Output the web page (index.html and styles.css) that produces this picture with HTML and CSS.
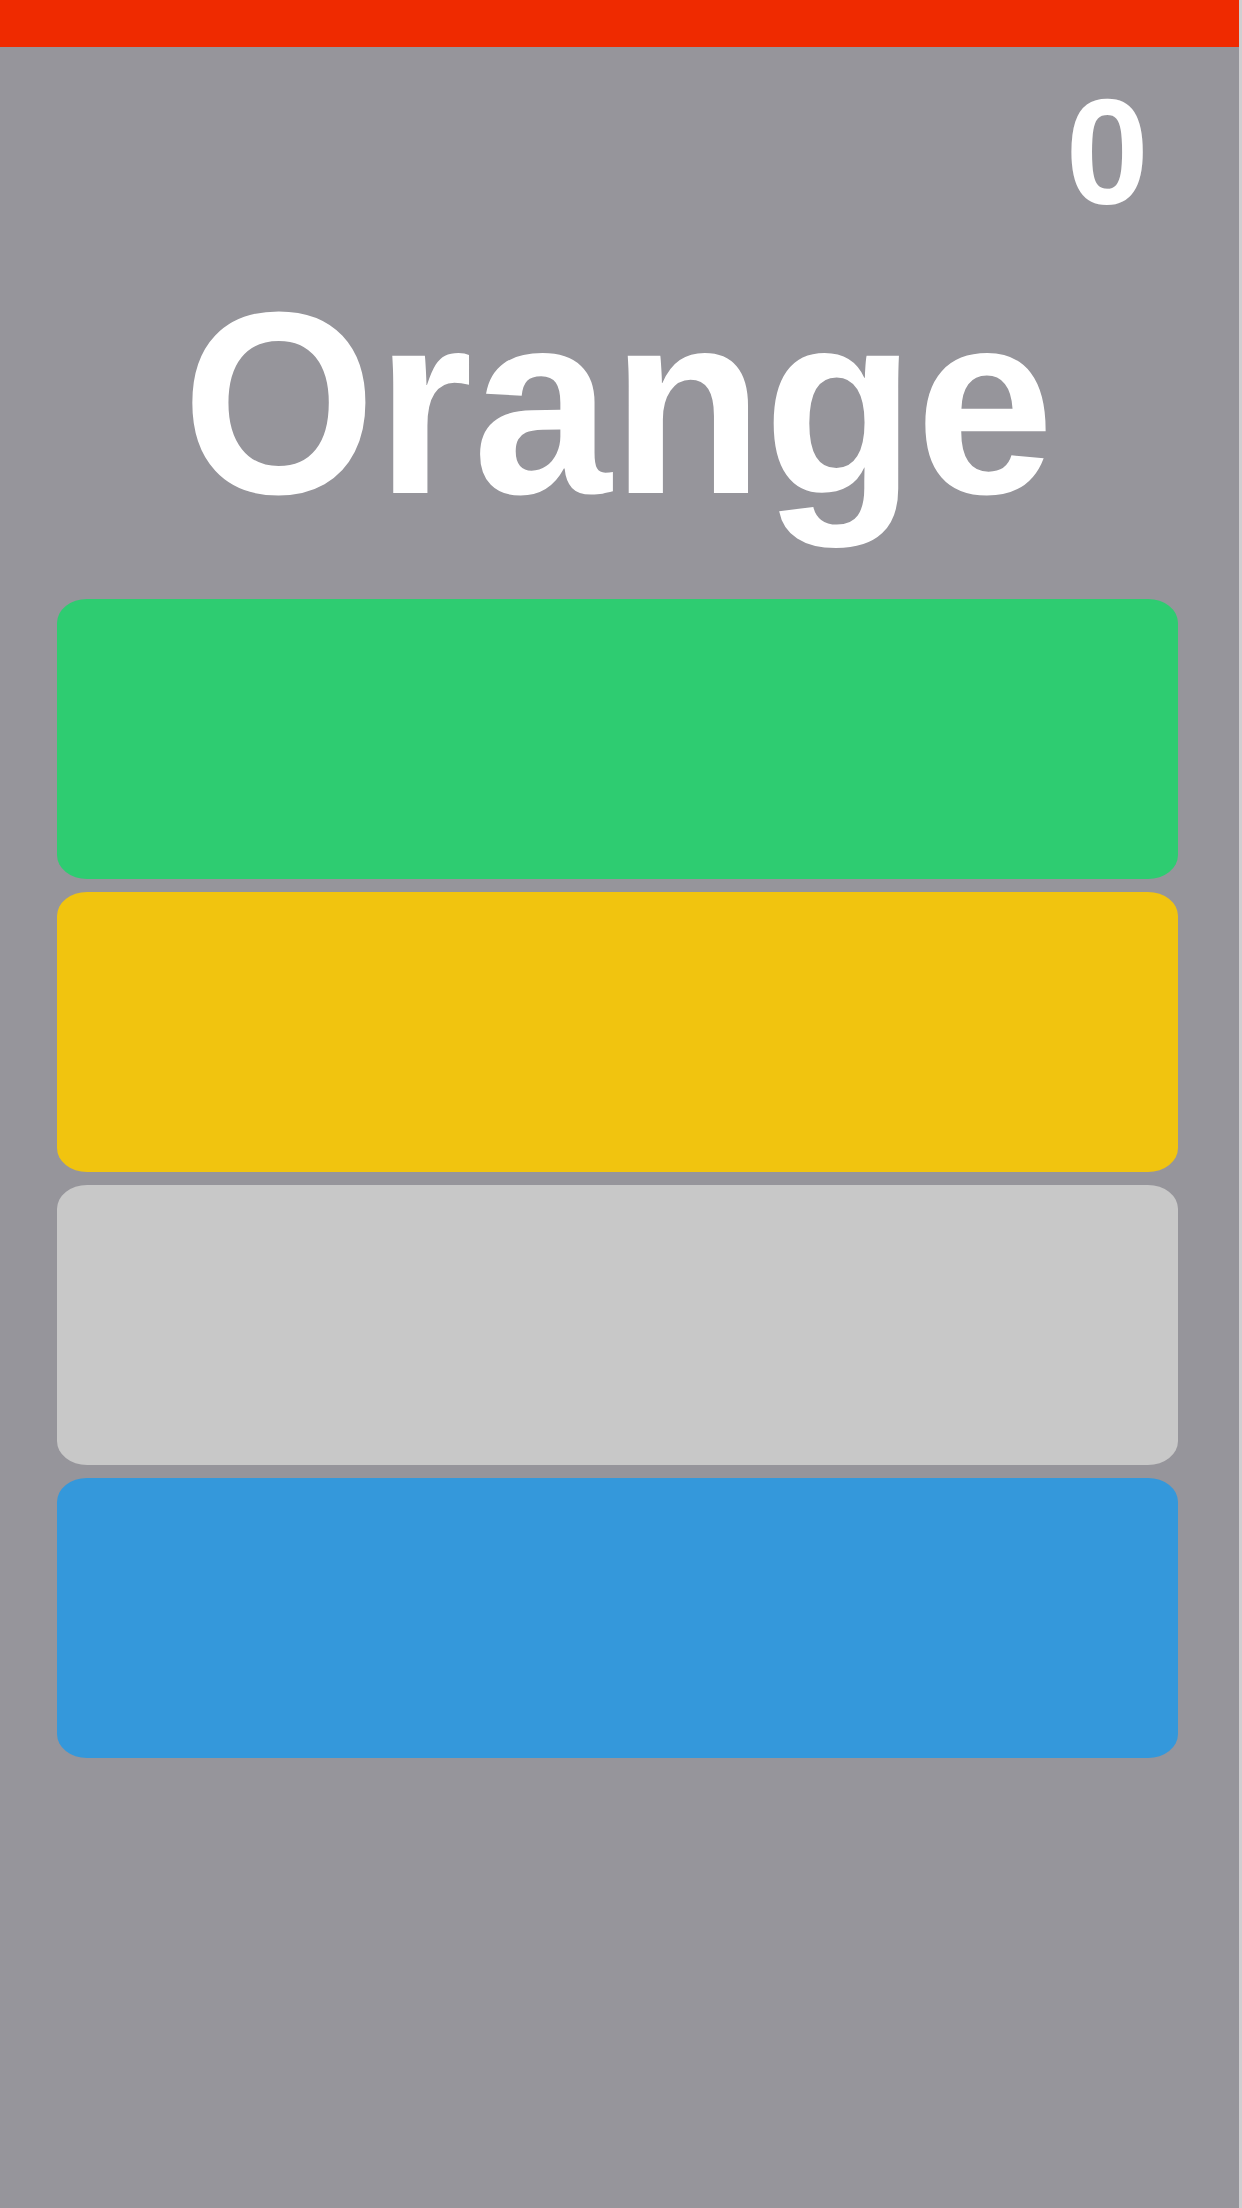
FILE: index.html
```html
<!DOCTYPE html>
<html>
<head>
<meta charset="utf-8">
<link rel="stylesheet" href="styles.css">
</head>
<body>
<div class="app">
  <div class="timer-bar"></div>
  <div class="score">0</div>
  <div class="word"><span class="word-text">Orange</span></div>
  <div class="choices">
    <div class="choice green"></div>
    <div class="choice yellow"></div>
    <div class="choice silver"></div>
    <div class="choice blue"></div>
  </div>
</div>
</body>
</html>
```
FILE: styles.css
```css
html, body {
  margin: 0;
  padding: 0;
}
body {
  background: #cfcfd1;
  font-family: "Liberation Sans", Arial, sans-serif;
}
.app {
  width: 1239px;
  height: 2208px;
  background: #96959b;
  display: flex;
  flex-direction: column;
}
.timer-bar {
  height: 47px;
  background: #ef2a00;
}
.score {
  margin-top: 30px;
  font-size: 150px;
  line-height: 1;
  font-weight: bold;
  color: #fff;
  text-align: right;
  padding-right: 90px;
}
.word {
  margin-top: 46px;
  font-size: 260px;
  line-height: 1;
  font-weight: bold;
  color: #fff;
  text-align: center;
}
.word-text {
  display: inline-block;
  transform: scaleX(0.958);
  margin-left: -2px;
}
.choices {
  margin-top: 66px;
  padding: 0 61px 0 57px;
  display: flex;
  flex-direction: column;
  gap: 13px;
}
.choice {
  height: 280px;
  border-radius: 30px / 24px;
}
.green { background: #2ecc71; }
.yellow { background: #f1c40f; }
.silver { background: #c8c8c8; }
.blue { background: #3498db; }
```
